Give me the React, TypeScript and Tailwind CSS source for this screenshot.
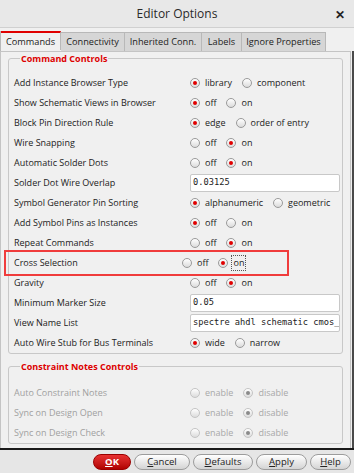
import React from "react";

const font = { fontFamily: '"Open Sans", "Noto Sans", sans-serif' };

function Radio({ checked, disabled }: { checked?: boolean; disabled?: boolean }) {
  return (
    <span
      className={
        "inline-flex h-[10px] w-[10px] shrink-0 items-center justify-center rounded-full border bg-gradient-to-b from-white to-[#dcdcdc] " +
        (disabled ? "border-[#c4c4c4]" : "border-[#9a9a9a]")
      }
    >
      {checked && (
        <span className={"h-[4px] w-[4px] rounded-full " + (disabled ? "bg-[#8a8a8a]" : "bg-[#e00000]")} />
      )}
    </span>
  );
}

function Radios({
  opts,
  sel,
  disabled,
  focus,
}: {
  opts: string[];
  sel: number;
  disabled?: boolean;
  focus?: boolean;
}) {
  return (
    <div className="flex items-center whitespace-nowrap">
      {opts.map((o, i) => (
        <div key={o} className="mr-[10px] flex items-center">
          <Radio checked={i === sel} disabled={disabled} />
          <span
            className={
              "leading-[14px] " +
              (disabled ? "text-[#a8a8a8]" : "text-[#222]") +
              (focus && i === sel ? " ml-[3px] border border-dotted border-[#555] px-[1px]" : " ml-[5px]")
            }
          >
            {o}
          </span>
        </div>
      ))}
    </div>
  );
}

function Field({ value }: { value: string }) {
  return (
    <div
      className="flex h-[18px] w-[150px] items-center overflow-hidden whitespace-nowrap rounded-[2px] border border-[#c8c8c8] bg-white pl-[2px] text-[8.7px] text-[#222]"
      style={{ fontFamily: '"DejaVu Sans Mono", "Liberation Mono", monospace' }}
    >
      {value}
    </div>
  );
}

type Row = { label: string; ctl: React.ReactNode; highlight?: boolean };

function Tab({ label, w, active }: { label: string; w: string; active?: boolean }) {
  return (
    <div
      className={
        "flex h-[19px] items-center justify-center whitespace-nowrap border-r border-t border-[#b8b8b8] text-[9.2px] text-[#222] " +
        w +
        (active ? " border-t-2 border-t-[#e00000] bg-[#f0f0f0]" : " mt-[1px] bg-[#d6d6d6]")
      }
    >
      {label}
    </div>
  );
}

function Btn({ children, red }: { children: React.ReactNode; red?: boolean }) {
  return (
    <div
      className={
        "flex h-[16px] items-center justify-center rounded-full border text-[9.5px] " +
        (red
          ? "border-[#900] bg-gradient-to-b from-[#e83030] to-[#b00000] font-bold text-white"
          : "border-[#9c9c9c] bg-gradient-to-b from-white to-[#d4d4d4] text-[#222]")
      }
    >
      {children}
    </div>
  );
}

export default function App() {
  const rows: Row[] = [
    { label: "Add Instance Browser Type", ctl: <Radios opts={["library", "component"]} sel={0} /> },
    { label: "Show Schematic Views in Browser", ctl: <Radios opts={["off", "on"]} sel={0} /> },
    { label: "Block Pin Direction Rule", ctl: <Radios opts={["edge", "order of entry"]} sel={0} /> },
    { label: "Wire Snapping", ctl: <Radios opts={["off", "on"]} sel={1} /> },
    { label: "Automatic Solder Dots", ctl: <Radios opts={["off", "on"]} sel={1} /> },
    { label: "Solder Dot Wire Overlap", ctl: <Field value="0.03125" /> },
    { label: "Symbol Generator Pin Sorting", ctl: <Radios opts={["alphanumeric", "geometric"]} sel={0} /> },
    { label: "Add Symbol Pins as Instances", ctl: <Radios opts={["off", "on"]} sel={0} /> },
    { label: "Repeat Commands", ctl: <Radios opts={["off", "on"]} sel={1} /> },
    { label: "Cross Selection", ctl: <Radios opts={["off", "on"]} sel={1} focus />, highlight: true },
    { label: "Gravity", ctl: <Radios opts={["off", "on"]} sel={1} /> },
    { label: "Minimum Marker Size", ctl: <Field value="0.05" /> },
    { label: "View Name List", ctl: <Field value="spectre ahdl schematic cmos_" /> },
    { label: "Auto Wire Stub for Bus Terminals", ctl: <Radios opts={["wide", "narrow"]} sel={0} /> },
  ];
  const rows2 = ["Auto Constraint Notes", "Sync on Design Open", "Sync on Design Check"];

  return (
    <div className="h-[473px] w-[354px] overflow-hidden bg-[#f0f0f0] text-[9px]" style={font}>
      {/* title bar */}
      <div className="relative flex h-[28px] items-center justify-center border-b border-[#d0d0d0] bg-[#e8e8e8]">
        <span className="text-[12px] text-[#2a2a2a]">Editor Options</span>
        <span className="absolute right-[9px] top-[6px] text-[12px] font-bold text-[#222]">✕</span>
      </div>
      {/* tabs */}
      <div className="mt-[3px] flex border-l border-[#b8b8b8]">
        <Tab label="Commands" w="w-[60px]" active />
        <Tab label="Connectivity" w="w-[64px]" />
        <Tab label="Inherited Conn." w="w-[77px]" />
        <Tab label="Labels" w="w-[40px]" />
        <Tab label="Ignore Properties" w="w-[84px]" />
      </div>
      {/* pane */}
      <div className="h-[397px] border-r-2 border-r-[#4a4a4a] pr-[1px]">
        <div className="h-full border-x border-t border-[#c4c4c4] bg-[#f0f0f0] px-[7px]">
          <fieldset className="mt-[1px] rounded-[3px] border border-[#c8c8c8] pb-[0px] pl-[5px]">
            <legend className="ml-[6px] px-[1px] text-[9px] font-bold leading-[11px] text-[#dd0000]">
              Command Controls
            </legend>
            <div className="mt-[9px] flex flex-col">
              {rows.map((r) => (
                <div
                  key={r.label}
                  className={
                    "flex h-[20px] items-center " +
                    (r.highlight
                      ? "-my-[3px] -ml-[10px] mr-[53px] h-[26px] border-2 border-[#f03c3c] pl-[8px]"
                      : "")
                  }
                >
                  <span className={"whitespace-nowrap text-[#222] " + (r.highlight ? "w-[168px]" : "w-[176px]")}>
                    {r.label}
                  </span>
                  {r.ctl}
                </div>
              ))}
            </div>
          </fieldset>
          <fieldset className="mt-[7px] rounded-[3px] border border-[#c8c8c8] pb-[0px] pl-[5px]">
            <legend className="ml-[6px] px-[1px] text-[9px] font-bold leading-[11px] text-[#dd0000]">
              Constraint Notes Controls
            </legend>
            <div className="mt-[11px] flex flex-col">
              {rows2.map((l) => (
                <div key={l} className="flex h-[20px] items-center">
                  <span className="w-[176px] whitespace-nowrap text-[#a0a0a0]">{l}</span>
                  <Radios opts={["enable", "disable"]} sel={1} disabled />
                </div>
              ))}
            </div>
          </fieldset>
        </div>
      </div>
      {/* bottom bar */}
      <div className="h-[2px] bg-[#1a1a1a]" />
      <div className="flex h-[24px] items-center justify-end gap-[3px] bg-[#e6e6e6] pr-[3px]">
        <div className="w-[38px]">
          <Btn red>
            <span className="underline">O</span>K
          </Btn>
        </div>
        <div className="w-[56px]">
          <Btn>
            <span className="underline">C</span>ancel
          </Btn>
        </div>
        <div className="w-[60px]">
          <Btn>
            <span className="underline">D</span>efaults
          </Btn>
        </div>
        <div className="w-[51px]">
          <Btn>
            <span className="underline">A</span>pply
          </Btn>
        </div>
        <div className="w-[41px]">
          <Btn>
            <span className="underline">H</span>elp
          </Btn>
        </div>
      </div>
    </div>
  );
}
